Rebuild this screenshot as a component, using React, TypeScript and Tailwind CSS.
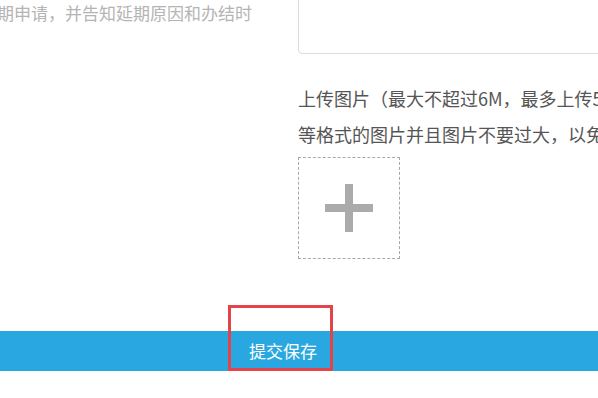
import React from 'react';

const font = { fontFamily: '"Microsoft YaHei", "Noto Sans CJK SC", "Liberation Sans", sans-serif' };

export default function App() {
  return (
    <div className="relative w-[598px] h-[398px] overflow-hidden bg-white" style={font}>
      <div className="flex">
        <div className="w-[298px] shrink-0 overflow-hidden">
          <p className="ml-[-3px] mt-[3px] whitespace-nowrap text-[17px] leading-[20px] text-[#b4b4b4]">
            期申请，并告知延期原因和办结时
          </p>
        </div>
        <div className="flex-1 min-w-0">
          <div className="mt-[-30px] h-[84px] w-[320px] rounded border border-[#dcdcdc]" />
          <div className="mt-[26px] whitespace-nowrap text-[18px] leading-[36px] text-[#555]">
            <p>上传图片（最大不超过6M，最多上传5张，支持jpg、png</p>
            <p>等格式的图片并且图片不要过大，以免上传失败）</p>
          </div>
          <div className="mt-[5px] flex h-[102px] w-[102px] items-center justify-center border border-dashed border-[#a8a8a8]">
            <svg width="48" height="48" viewBox="0 0 48 48">
              <rect x="20" y="0" width="8" height="48" fill="#ababab" />
              <rect x="0" y="20" width="48" height="8" fill="#ababab" />
            </svg>
          </div>
        </div>
      </div>
      <div className="mt-[72px] flex h-[40px] items-center bg-[#29a7e1] pl-[249px]">
        <span className="text-[17px] text-white">提交保存</span>
      </div>
      <div className="absolute left-[228px] top-[305px] h-[66px] w-[105px] border-[3px] border-[#e5434a]" />
    </div>
  );
}
